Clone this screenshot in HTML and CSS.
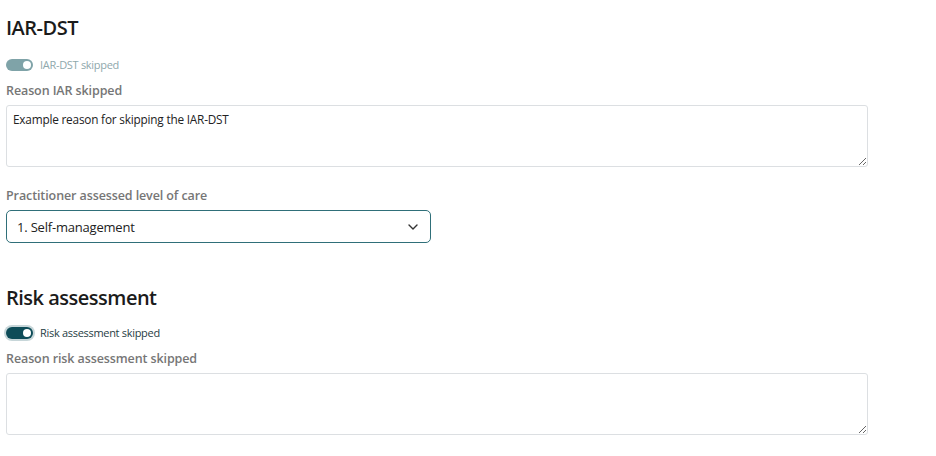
FILE: index.html
```html
<!DOCTYPE html>
<html lang="en">
<head>
<meta charset="utf-8">
<title>IAR-DST</title>
<link rel="stylesheet" href="styles.css">
</head>
<body>
<main class="page">
  <section class="section">
    <h2 class="title">IAR-DST</h2>
    <div class="switch-row disabled">
      <span class="switch"><span class="knob"></span></span>
      <span class="switch-label">IAR-DST skipped</span>
    </div>
    <label class="field-label">Reason IAR skipped</label>
    <textarea class="textarea">Example reason for skipping the IAR-DST</textarea>
    <label class="field-label second">Practitioner assessed level of care</label>
    <div class="select">
      <span class="select-value">1. Self-management</span>
      <svg class="chevron" width="10" height="6" viewBox="0 0 10 6"><path d="M1 1l4 4 4-4" fill="none" stroke="#333" stroke-width="1.4" stroke-linecap="round" stroke-linejoin="round"/></svg>
    </div>
  </section>
  <section class="section risk">
    <h2 class="title">Risk assessment</h2>
    <div class="switch-row active">
      <span class="switch"><span class="knob"></span></span>
      <span class="switch-label">Risk assessment skipped</span>
    </div>
    <label class="field-label">Reason risk assessment skipped</label>
    <textarea class="textarea"></textarea>
  </section>
</main>
</body>
</html>
```
FILE: styles.css
```css
html, body {
  margin: 0;
  padding: 0;
  background: #ffffff;
}
body {
  font-family: "Open Sans", "Noto Sans", sans-serif;
  color: #212529;
}
.page {
  padding: 12px 0 0 6px;
}
.section {
  display: flex;
  flex-direction: column;
  align-items: flex-start;
}
.title {
  margin: 0;
  font-size: 20px;
  font-weight: 600;
  line-height: 32px;
  color: #1b1b1b;
  letter-spacing: -0.5px;
}
.switch-row {
  display: flex;
  align-items: center;
  gap: 7px;
  margin-top: 13px;
  height: 16px;
}
.switch {
  width: 27px;
  height: 12px;
  border-radius: 6px;
  display: flex;
  align-items: center;
  justify-content: flex-end;
  padding-right: 2px;
  box-sizing: border-box;
}
.knob {
  width: 8px;
  height: 8px;
  border-radius: 50%;
  background: #ffffff;
}
.disabled .switch {
  background: #7fa3a8;
}
.disabled .switch-label {
  color: #8fa8ac;
}
.active .switch {
  background: #0e4c58;
  box-shadow: 0 0 0 2px #c7d6d9;
}
.active .switch-label {
  color: #1f3d44;
}
.switch-label {
  font-size: 11px;
  letter-spacing: -0.3px;
  line-height: 16px;
}
.field-label {
  display: block;
  margin-top: 9px;
  font-size: 12.5px;
  font-weight: 600;
  color: #767676;
  line-height: 18px;
  letter-spacing: -0.1px;
}
.field-label.second {
  margin-top: 20px;
}
.textarea {
  display: block;
  margin: 5px 0 0;
  width: 862px;
  height: 62px;
  box-sizing: border-box;
  border: 1px solid #dcdfe2;
  border-radius: 3px;
  padding: 5px 6px;
  font-family: "Open Sans", "Noto Sans", sans-serif;
  font-size: 11.8px;
  color: #222;
  letter-spacing: -0.2px;
  resize: vertical;
  outline: none;
}
.select {
  margin-top: 5px;
  width: 425px;
  height: 33px;
  box-sizing: border-box;
  border: 1px solid #2f6f79;
  border-radius: 5px;
  display: flex;
  align-items: center;
  justify-content: space-between;
  padding: 0 12px 0 10px;
}
.select-value {
  font-size: 13px;
  color: #222;
  letter-spacing: -0.2px;
}
.chevron {
  display: block;
}
.risk {
  margin-top: 39px;
}
.risk .switch-row {
  margin-top: 11px;
}
.risk .field-label {
  margin-top: 9px;
}
```
